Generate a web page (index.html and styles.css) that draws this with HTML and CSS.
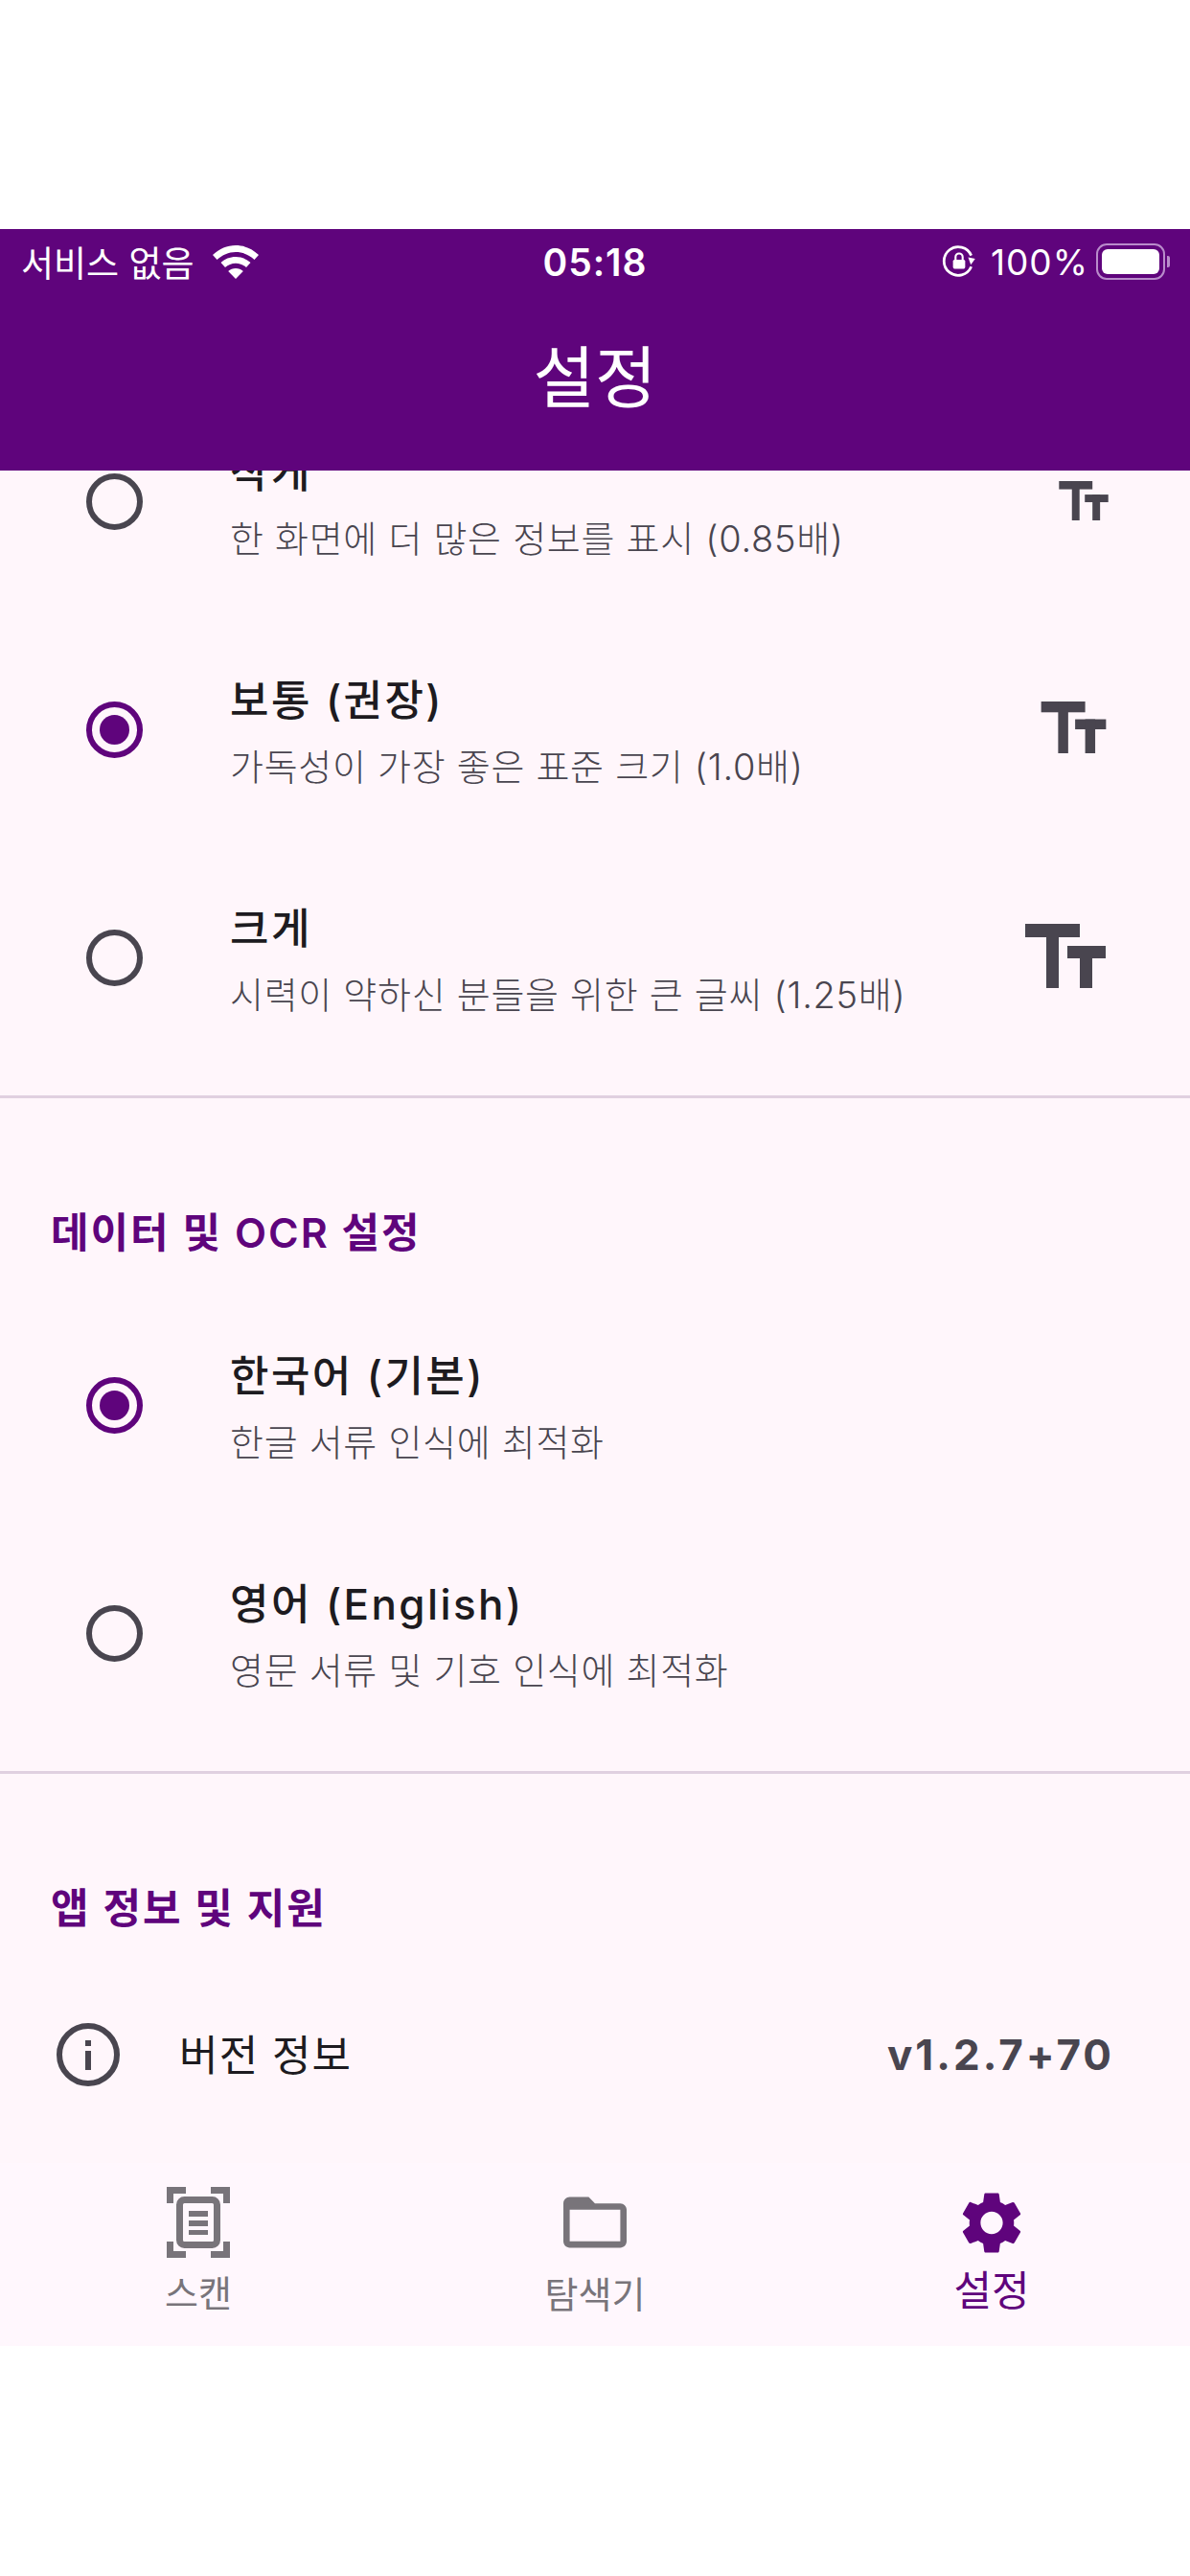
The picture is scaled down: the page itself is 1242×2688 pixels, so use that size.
FILE: index.html
```html
<!DOCTYPE html>
<html lang="ko">
<head>
    <meta charset="UTF-8">
    <meta name="viewport" content="width=device-width, initial-scale=1.0">
    <title>설정</title>
    <link rel="stylesheet" href="styles.css">
</head>
<body>
    <svg class="defs" width="0" height="0">
        <symbol id="tt" viewBox="0 0 84 67">
            <rect x="0" y="0" width="57" height="14"/>
            <rect x="22" y="0" width="13" height="67"/>
            <rect x="44" y="23" width="40" height="13"/>
            <rect x="57" y="23" width="13" height="44"/>
        </symbol>
    </svg>

    <div class="screen">
        <!-- App bar -->
        <header class="app-bar">
            <div class="status-bar">
                <div class="status-left">
                    <span>서비스 없음</span>
                    <svg class="wifi" viewBox="0 0 48 35">
                        <path d="M24 0C15 0 7 3.500 0 10l4.500 5C10 10 16.500 7 24 7s14 3 19.500 8l4.500-5C41 3.500 33 0 24 0z"/>
                        <path d="M24 12c-6 0-11.500 2.300-15.500 6l4.500 5c3-2.700 6.800-4.300 11-4.300s8 1.600 11 4.300l4.500-5c-4-3.700-9.500-6-15.500-6z"/>
                        <path d="M24 24c-3 0-5.800 1.100-7.800 3L24 35l7.800-8c-2-1.900-4.800-3-7.800-3z"/>
                    </svg>
                </div>
                <div class="status-time">05:18</div>
                <div class="status-right">
                    <svg class="rotation-lock" viewBox="0 0 34 34">
                        <path d="M29 22A14 14 0 1 1 29 11" fill="none" stroke="#fff" stroke-width="2.600"/>
                        <path d="M25 14l7-1 -2 7z" fill="#fff" transform="rotate(20 29 16)"/>
                        <rect x="11" y="15" width="12" height="9" rx="1.500" fill="#fff"/>
                        <path d="M13.500 15v-2.500a3.500 3.500 0 0 1 7 0V15" fill="none" stroke="#fff" stroke-width="2"/>
                    </svg>
                    <span class="battery-pct">100%</span>
                    <div class="battery"><div class="battery-fill"></div></div>
                    <div class="battery-tip"></div>
                </div>
            </div>
            <h1 class="app-title">설정</h1>
        </header>

        <!-- Settings list, scrolled a little -->
        <main class="content">
            <div class="scroll-list">
                <div class="option-row">
                    <div class="radio"></div>
                    <div class="option-text">
                        <div class="option-title">작게</div>
                        <div class="option-sub">한 화면에 더 많은 정보를 표시 (0.85배)</div>
                    </div>
                    <svg class="tt tt-small"><use href="#tt"/></svg>
                </div>
                <div class="option-row">
                    <div class="radio checked"></div>
                    <div class="option-text">
                        <div class="option-title">보통 (권장)</div>
                        <div class="option-sub">가독성이 가장 좋은 표준 크기 (1.0배)</div>
                    </div>
                    <svg class="tt tt-medium"><use href="#tt"/></svg>
                </div>
                <div class="option-row">
                    <div class="radio"></div>
                    <div class="option-text">
                        <div class="option-title">크게</div>
                        <div class="option-sub">시력이 약하신 분들을 위한 큰 글씨 (1.25배)</div>
                    </div>
                    <svg class="tt tt-large"><use href="#tt"/></svg>
                </div>

                <div class="divider"></div>
                <h2 class="section-title">데이터 및 OCR 설정</h2>

                <div class="option-row">
                    <div class="radio checked"></div>
                    <div class="option-text">
                        <div class="option-title">한국어 (기본)</div>
                        <div class="option-sub">한글 서류 인식에 최적화</div>
                    </div>
                </div>
                <div class="option-row">
                    <div class="radio"></div>
                    <div class="option-text">
                        <div class="option-title">영어 (English)</div>
                        <div class="option-sub">영문 서류 및 기호 인식에 최적화</div>
                    </div>
                </div>

                <div class="divider"></div>
                <h2 class="section-title">앱 정보 및 지원</h2>

                <div class="info-row">
                    <svg class="info-icon" viewBox="0 0 66 66">
                        <circle cx="33" cy="33" r="30" fill="none" stroke="#49454f" stroke-width="6"/>
                        <rect x="30" y="29" width="6" height="20" fill="#49454f"/>
                        <rect x="30" y="18" width="6" height="6" fill="#49454f"/>
                    </svg>
                    <div class="info-label">버전 정보</div>
                    <div class="info-value">v1.2.7+70</div>
                </div>
            </div>
        </main>

        <!-- Bottom navigation -->
        <nav class="bottom-nav">
            <div class="nav-item">
                <svg class="nav-scan" viewBox="0 0 66 74">
                    <path d="M3.500 17V3.500H20M46 3.500H62.500V17M3.500 57V70.500H20M46 70.500H62.500V57" fill="none" stroke="#78747a" stroke-width="7"/>
                    <rect x="13.500" y="13.500" width="39" height="47" rx="5" fill="none" stroke="#78747a" stroke-width="7"/>
                    <path d="M23 25h20v6H23zM23 35h20v6H23zM23 45h20v5H23z" fill="#78747a"/>
                </svg>
                <span class="nav-label">스캔</span>
            </div>
            <div class="nav-item">
                <svg class="nav-folder" viewBox="2 4 20 16">
                    <path d="M20 6h-8l-2-2H4c-1.100 0-1.990.9-1.990 2L2 18c0 1.100.9 2 2 2h16c1.100 0 2-.9 2-2V8c0-1.100-.9-2-2-2zm0 12H4V8h16v10z" fill="#78747a"/>
                </svg>
                <span class="nav-label">탐색기</span>
            </div>
            <div class="nav-item active">
                <svg class="nav-gear" viewBox="2.400 2.400 19.200 19.200">
                    <path d="M19.140 12.940c.04-.3.06-.61.06-.94 0-.32-.02-.64-.07-.94l2.030-1.580c.18-.14.23-.41.12-.61l-1.920-3.320c-.12-.22-.37-.29-.59-.22l-2.390.96c-.5-.38-1.030-.7-1.620-.94L14.400 2.810c-.04-.24-.24-.41-.48-.41h-3.840c-.24 0-.43.17-.47.41L9.250 5.350c-.59.24-1.130.57-1.620.94L5.240 5.330c-.22-.08-.47 0-.59.22L2.740 8.870c-.12.21-.08.47.12.61l2.030 1.580c-.05.3-.09.63-.09.94s.02.64.07.94l-2.030 1.580c-.18.14-.23.41-.12.61l1.920 3.320c.12.22.37.29.59.22l2.390-.96c.5.38 1.030.7 1.620.94l.36 2.540c.05.24.24.41.48.41h3.840c.24 0 .44-.17.47-.41l.36-2.540c.59-.24 1.130-.56 1.620-.94l2.390.96c.22.08.47 0 .59-.22l1.920-3.320c.12-.22.07-.47-.12-.61l-2.010-1.580zM12 15.600c-1.980 0-3.600-1.620-3.600-3.600s1.620-3.600 3.600-3.600 3.600 1.620 3.600 3.600-1.620 3.600-3.600 3.600z" fill="#5f047c"/>
                </svg>
                <span class="nav-label">설정</span>
            </div>
        </nav>
    </div>
</body>
</html>
```

FILE: styles.css
```css
* {
    margin: 0;
    padding: 0;
    box-sizing: border-box;
}

body {
    width: 1242px;
    height: 2688px;
    background: #fff;
    font-family: Inter, "Noto Sans CJK KR", sans-serif;
    overflow: hidden;
}

.defs {
    display: block;
}

.screen {
    margin-top: 239px;
    height: 2209px;
    display: flex;
    flex-direction: column;
    background: #fff6fb;
}

/* App bar */
.app-bar {
    flex: 0 0 252px;
    background: #5f047c;
    color: #fff;
    position: relative;
    z-index: 2;
}

.status-bar {
    height: 60px;
    padding: 8px 22px 0;
    display: flex;
    justify-content: space-between;
    align-items: center;
    font-size: 37px;
}

.status-left,
.status-right {
    flex: 1;
    display: flex;
    align-items: center;
}

.status-left {
    gap: 19px;
}

.status-right {
    justify-content: flex-end;
}

.wifi {
    width: 48px;
    height: 35px;
    fill: #fff;
}

.status-time {
    font-weight: 600;
    font-size: 39px;
    letter-spacing: 1px;
}

.rotation-lock {
    width: 36px;
    height: 36px;
    margin-right: 15px;
}

.battery-pct {
    letter-spacing: 1px;
}

.battery {
    width: 72px;
    height: 38px;
    margin-left: 8px;
    padding: 4px;
    border: 2px solid #b98ccb;
    border-radius: 11px;
}

.battery-fill {
    width: 100%;
    height: 100%;
    background: #fff;
    border-radius: 6px;
}

.battery-tip {
    width: 3px;
    height: 12px;
    margin: 0 -1px 0 2px;
    background: #b98ccb;
    border-radius: 0 2px 2px 0;
}

.app-title {
    margin-top: 53px;
    text-align: center;
    font-size: 70px;
    font-weight: 400;
    line-height: 86px;
}

/* List */
.content {
    flex: 1;
    min-height: 0;
    overflow: hidden;
}

.scroll-list {
    margin-top: -87px;
}

.option-row {
    height: 238px;
    padding: 0 88px 0 90px;
    display: flex;
    align-items: center;
}

.radio {
    flex: 0 0 59px;
    height: 59px;
    margin-right: 91px;
    border: 6px solid #49454f;
    border-radius: 50%;
    display: flex;
    align-items: center;
    justify-content: center;
}

.radio.checked {
    border-color: #5f047c;
}

.radio.checked::after {
    content: "";
    width: 31px;
    height: 31px;
    background: #5f047c;
    border-radius: 50%;
}

.option-text {
    flex: 1;
    padding-top: 4px;
}

.option-title {
    font-size: 44px;
    font-weight: 500;
    letter-spacing: 2.4px;
    line-height: 60px;
    color: #1d1b20;
}

.option-sub {
    margin-top: 13px;
    font-size: 38px;
    font-weight: 300;
    letter-spacing: 0.7px;
    line-height: 52px;
    color: #49454f;
}

.tt {
    fill: #49454f;
    flex: none;
    margin-top: -4px;
}

.tt-small {
    width: 52px;
    height: 41px;
    margin-top: -2px;
    margin-right: -3px;
}

.tt-medium {
    width: 69px;
    height: 54px;
    margin-right: -1px;
}

.tt-large {
    width: 84px;
    height: 67px;
}

.divider {
    margin-top: 25px;
    height: 3px;
    background: #e0d0e0;
}

.section-title {
    padding: 72px 53px 0;
    height: 201px;
    display: flex;
    align-items: center;
    font-size: 43px;
    font-weight: 600;
    letter-spacing: 2px;
    color: #5f047c;
}

.info-row {
    margin-top: 32px;
    padding: 0 79px 0 59px;
    height: 120px;
    display: flex;
    align-items: center;
}

.info-icon {
    width: 66px;
    height: 66px;
    margin-right: 62px;
}

.info-label {
    flex: 1;
    font-size: 44px;
    letter-spacing: 1.2px;
    margin-top: -4px;
    color: #1d1b20;
}

.info-value {
    font-size: 44px;
    font-weight: 700;
    letter-spacing: 3px;
    color: #49454f;
}

/* Bottom navigation */
.bottom-nav {
    flex: 0 0 191px;
    background: #fff7fd;
    display: flex;
}

.nav-item {
    flex: 1;
    height: 100%;
    display: flex;
    flex-direction: column;
    align-items: center;
    color: #78747a;
}

.nav-scan {
    width: 66px;
    height: 74px;
    margin-top: 25px;
}

.nav-folder {
    width: 66px;
    height: 54px;
    margin-top: 35px;
}

.nav-gear {
    width: 62px;
    height: 63px;
    margin-top: 31px;
}

.nav-label {
    font-size: 38px;
    line-height: 46px;
    margin-top: 14px;
}

.nav-item:nth-child(2) .nav-label {
    margin-top: 25px;
}

.nav-item.active {
    color: #5f047c;
}

.nav-item.active .nav-label {
    font-size: 43px;
    line-height: 52px;
    margin-top: 13px;
}
```
